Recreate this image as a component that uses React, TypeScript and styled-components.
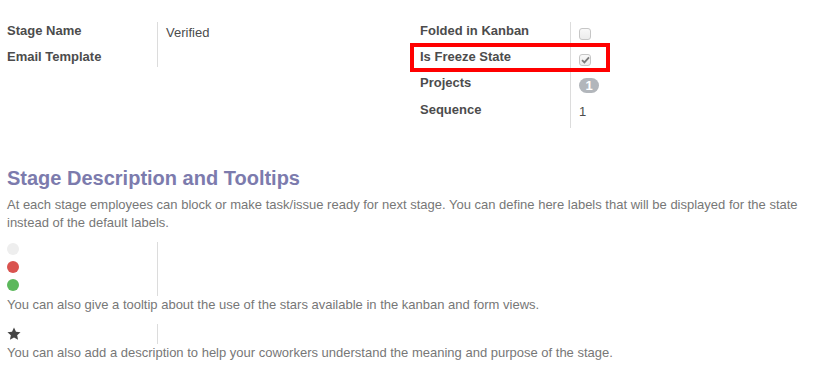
import React, { FC } from 'react';
import styled, { createGlobalStyle } from 'styled-components';

const GlobalStyle = createGlobalStyle`
  body {
    margin: 0;
    background: #ffffff;
    font-family: "Liberation Sans", Arial, sans-serif;
    font-size: 13px;
    color: #4c4c4c;
  }
`;

const Sheet = styled.div`
  width: 832px;
  height: 390px;
  box-sizing: border-box;
  padding: 22px 7px 0 7px;
  overflow: hidden;
`;

const TopGroups = styled.div`
  display: grid;
  grid-template-columns: 413px 1fr;
  align-items: start;
`;

const Group = styled.div`
  position: relative;
  display: grid;
  grid-template-columns: 151px 1fr;
  align-content: start;
`;

const Label = styled.div<{ $pad?: number }>`
  box-sizing: border-box;
  border-right: 1px solid #dcdcdc;
  font-weight: bold;
  line-height: 18px;
  color: #4c4c4c;
  padding-bottom: ${({ $pad }) => $pad ?? 8}px;
`;

const Value = styled.div`
  padding-left: 8px;
  padding-top: 2px;
  line-height: 18px;
  color: #4c4c4c;
`;

const CheckBox = styled.span`
  display: flex;
  align-items: center;
  justify-content: center;
  width: 12px;
  height: 12px;
  margin-top: 4px;
  box-sizing: border-box;
  border: 1px solid #c6c6c6;
  border-radius: 3px;
  background: linear-gradient(#f8f8f8, #ececec);
`;

const Badge = styled.span`
  display: inline-flex;
  align-items: center;
  justify-content: center;
  width: 20px;
  height: 15px;
  margin-top: 2px;
  border-radius: 8px;
  background: #b2b6bb;
  color: #ffffff;
  font-size: 13px;
  font-weight: bold;
`;

const Highlight = styled.div`
  position: absolute;
  left: -10px;
  top: 21px;
  width: 200px;
  height: 29px;
  box-sizing: border-box;
  border: 4px solid #ff0000;
  pointer-events: none;
`;

const Heading = styled.h2`
  margin: 39px 0 7px 0;
  font-size: 20px;
  line-height: 22px;
  font-weight: bold;
  color: #7c7bad;
`;

const Muted = styled.p`
  margin: 0 0 10px 0;
  line-height: 18px;
  color: #777777;
`;

const LegendGroup = styled.div`
  display: grid;
  grid-template-columns: 151px 1fr;
`;

const LegendCell = styled.div<{ $height: number }>`
  box-sizing: border-box;
  height: ${({ $height }) => $height}px;
  border-right: 1px solid #dcdcdc;
`;

const StatusDot = styled.span<{ $color: string }>`
  display: block;
  width: 12px;
  height: 12px;
  margin-top: 1px;
  border-radius: 50%;
  background: ${({ $color }) => $color};
`;

const StarIcon = styled.svg`
  display: block;
  margin-top: 3px;
`;

const Check: FC = () => (
  <svg width="9" height="8" viewBox="0 0 9 8">
    <path d="M1 4.2 L3.4 6.4 L8 1.4" fill="none" stroke="#7a7a7a" strokeWidth="1.8" />
  </svg>
);

const statuses = ['#eeeeee', '#d9534f', '#5cb85c'];

const App: FC = () => (
  <>
    <GlobalStyle />
    <Sheet>
      <TopGroups>
        <Group>
          <Label>Stage Name</Label>
          <Value>Verified</Value>
          <Label $pad={1}>Email Template</Label>
          <Value />
        </Group>
        <Group>
          <Label>Folded in Kanban</Label>
          <Value><CheckBox /></Value>
          <Label>Is Freeze State</Label>
          <Value><CheckBox><Check /></CheckBox></Value>
          <Label $pad={9}>Projects</Label>
          <Value><Badge>1</Badge></Value>
          <Label $pad={9}>Sequence</Label>
          <Value>1</Value>
          <Highlight />
        </Group>
      </TopGroups>

      <Heading>Stage Description and Tooltips</Heading>
      <Muted>
        At each stage employees can block or make task/issue ready for next stage. You can define here labels that will be displayed for the state instead of the default labels.
      </Muted>
      <LegendGroup>
        {statuses.map((c) => (
          <React.Fragment key={c}>
            <LegendCell $height={18}><StatusDot $color={c} /></LegendCell>
            <div />
          </React.Fragment>
        ))}
      </LegendGroup>
      <Muted>You can also give a tooltip about the use of the stars available in the kanban and form views.</Muted>
      <LegendGroup>
        <LegendCell $height={20}>
          <StarIcon width="14" height="14" viewBox="0 0 24 24">
            <path
              d="M12 1l3.4 7.1 7.8.9-5.8 5.3 1.6 7.7L12 18.1l-7 3.9 1.6-7.7L.8 9l7.8-.9z"
              fill="#444444"
            />
          </StarIcon>
        </LegendCell>
        <div />
      </LegendGroup>
      <Muted>You can also add a description to help your coworkers understand the meaning and purpose of the stage.</Muted>
    </Sheet>
  </>
);

export default App;
